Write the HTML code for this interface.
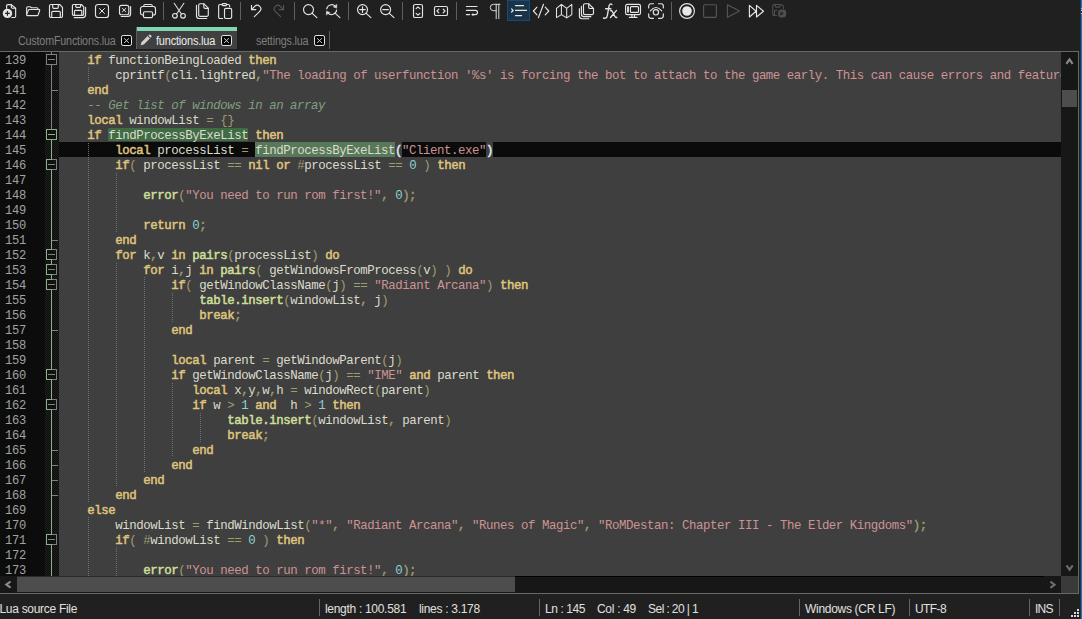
<!DOCTYPE html>
<html><head><meta charset="utf-8"><title>functions.lua - Notepad++</title>
<style>
html,body{margin:0;padding:0;}
body{width:1082px;height:619px;overflow:hidden;background:#202020;position:relative;font-family:"Liberation Sans",sans-serif;}
#root{position:absolute;left:0;top:0;width:1082px;height:619px;overflow:hidden;background:#202020;}
.abs{position:absolute;}
/* toolbar */
/* tabs */
.tab{position:absolute;font-size:12px;letter-spacing:-0.2px;transform-origin:0 0;white-space:nowrap;line-height:14px;}
/* editor */
#ed{position:absolute;left:0;top:52px;width:1061px;height:524px;background:#3f3f3f;overflow:hidden;}
#lnm{position:absolute;left:0;top:0;width:45px;height:524px;background:#0c0c0c;}
#fm{position:absolute;left:45px;top:0;width:14px;height:524px;background:repeating-conic-gradient(#0c0c0c 0% 25%,#1f1f1f 0% 50%) 0 0/2px 2px;}
.ln{position:absolute;left:5px;width:40px;height:15px;line-height:15px;font-family:"Liberation Mono",monospace;font-size:12.1px;letter-spacing:-0.26px;color:#a2a2a2;white-space:pre;}
.cl{position:absolute;height:15px;line-height:15px;font-family:"Liberation Mono",monospace;font-size:12.4px;letter-spacing:-0.44px;color:#dcdccc;white-space:pre;}
.cl i{font-style:normal;}
.cl b{font-weight:normal;-webkit-text-stroke:0.5px;}
.k{color:#dfc47d;}
.bm{color:#dde6f4;}
.f{color:#cedf99;}
.s{color:#cc9393;}
.n{color:#8cd0d3;}
.o{color:#9f9d6d;}
.p{-webkit-text-stroke:0.35px;}
.cl i.c{color:#7f9f7f;font-style:italic;}
.ig{position:absolute;width:1px;background:repeating-linear-gradient(to bottom,#5e7878 0 1px,transparent 1px 2px);}
/* status */
.st{position:absolute;top:602px;font-size:12px;letter-spacing:-0.3px;color:#e0e0e0;white-space:nowrap;line-height:14px;}
.ssep{position:absolute;top:599px;width:1px;height:17px;background:#646464;}
</style></head><body><div id="root">
<svg class="abs" style="left:0;top:0" width="800" height="26" viewBox="0 0 800 26">
<rect x="507.5" y="0.5" width="22" height="20" fill="#1b3349" stroke="#154a7c" stroke-width="1"/>
<rect x="163" y="2" width="1" height="18" fill="#606060" shape-rendering="crispEdges"/><rect x="240" y="2" width="1" height="18" fill="#606060" shape-rendering="crispEdges"/><rect x="294" y="2" width="1" height="18" fill="#606060" shape-rendering="crispEdges"/><rect x="348" y="2" width="1" height="18" fill="#606060" shape-rendering="crispEdges"/><rect x="402" y="2" width="1" height="18" fill="#606060" shape-rendering="crispEdges"/><rect x="456" y="2" width="1" height="18" fill="#606060" shape-rendering="crispEdges"/><rect x="671" y="2" width="1" height="18" fill="#606060" shape-rendering="crispEdges"/>
<g transform="translate(1.5,3)" stroke="#e4e4e4" stroke-width="1.15" fill="none" stroke-linecap="round" stroke-linejoin="round"><path d="M5.1 5.3 V2.8 a1.25 1.25 0 0 1 1.25-1.25 H9.5 L14.15 5.3 V13.25 a1.25 1.25 0 0 1 -1.25 1.25 H10.2"/><path d="M9.8 1.8 V4.1 a1.1 1.1 0 0 0 1.1 1.1 H13.9"/><circle cx="5.95" cy="10.4" r="4.7" fill="#e4e4e4" stroke="none"/><path d="M5.95 8 V12.8 M3.55 10.4 H8.35" stroke="#202020" stroke-width="1.1" stroke-linecap="butt"/></g>
<g transform="translate(25,3)" stroke="#e4e4e4" stroke-width="1.15" fill="none" stroke-linecap="round" stroke-linejoin="round"><path d="M1.65 11.3 V4.9 a1.2 1.2 0 0 1 1.2-1.2 H5 l1.5 1.05 H11.7 a1.3 1.3 0 0 1 1.3 1.3 v.3"/><path d="M2.5 12.65 a.9.9 0 0 1 -.85-1.25 L3.45 7.1 a1.1 1.1 0 0 1 1-.65 H13.9 a.8.8 0 0 1 .75 1.1 L13.05 11.95 a1.1 1.1 0 0 1 -1 .7 z"/></g>
<g transform="translate(48,3)" stroke="#e4e4e4" stroke-width="1.15" fill="none" stroke-linecap="round" stroke-linejoin="round"><path d="M2.9 1.5 H11.6 L14.5 4.4 V13.1 a1.4 1.4 0 0 1 -1.4 1.4 H2.9 a1.4 1.4 0 0 1 -1.4-1.4 V2.9 a1.4 1.4 0 0 1 1.4-1.4 z"/><path d="M4.7 1.6 V4.3 a1 1 0 0 0 1 1 H9.3 a1 1 0 0 0 1-1 V1.6"/><path d="M3.7 14.4 V9.5 a1.1 1.1 0 0 1 1.1-1.1 H11.2 a1.1 1.1 0 0 1 1.1 1.1 V14.4"/></g>
<g transform="translate(71,3)" stroke="#e4e4e4" stroke-width="1.15" fill="none" stroke-linecap="round" stroke-linejoin="round"><path d="M2.7 1.5 H10.4 L12.7 3.8 V11.1 a1.3 1.3 0 0 1 -1.3 1.3 H2.7 a1.3 1.3 0 0 1 -1.3-1.3 V2.8 a1.3 1.3 0 0 1 1.3-1.3 z"/><path d="M4.8 1.6 V3.6 a.8.8 0 0 0 .8.8 H8.8 a.8.8 0 0 0 .8-.8 V1.6"/><path d="M3.5 12.3 V8.3 a.9.9 0 0 1 .9-.9 H9.9 a.9.9 0 0 1 .9.9 V12.3"/><path d="M14.6 4.3 V11.8 a2.8 2.8 0 0 1 -2.8 2.8 H3.2"/></g>
<g transform="translate(94,3)" stroke="#e4e4e4" stroke-width="1.15" fill="none" stroke-linecap="round" stroke-linejoin="round"><rect x="1.5" y="1.5" width="13" height="13" rx="2.6"/><path d="M5.5 5.5 L10.5 10.5 M10.5 5.5 L5.5 10.5" stroke-width="1"/></g>
<g transform="translate(117,3)" stroke="#e4e4e4" stroke-width="1.15" fill="none" stroke-linecap="round" stroke-linejoin="round"><rect x="2.5" y="2.4" width="9.3" height="9.3" rx="2"/><path d="M5.4 5.3 L8.9 8.8 M8.9 5.3 L5.4 8.8" stroke-width="1"/><path d="M13.6 3.6 V10.8 a2.7 2.7 0 0 1 -2.7 2.7 H4.2"/></g>
<g transform="translate(140,3)" stroke="#e4e4e4" stroke-width="1.15" fill="none" stroke-linecap="round" stroke-linejoin="round"><path d="M3.3 12 H2.5 a2 2 0 0 1 -2-2 V5.7 a2.2 2.2 0 0 1 2.2-2.2 H13.3 a2.2 2.2 0 0 1 2.2 2.2 V10 a2 2 0 0 1 -2 2 H12.7"/><path d="M3.8 3.4 V2.7 a1.2 1.2 0 0 1 1.2-1.2 H11 a1.2 1.2 0 0 1 1.2 1.2 V3.4"/><rect x="3.5" y="8.7" width="9" height="5.9" rx="1.2"/></g>
<g transform="translate(171,3)" stroke="#e4e4e4" stroke-width="1.15" fill="none" stroke-linecap="round" stroke-linejoin="round"><path d="M3.2 0.3 L10.6 11.2 M12.9 0.3 L5.4 11.2" stroke-width="1.05"/><circle cx="3.9" cy="12.8" r="2.35"/><circle cx="12.0" cy="12.8" r="2.35"/></g>
<g transform="translate(194,3)" stroke="#e4e4e4" stroke-width="1.15" fill="none" stroke-linecap="round" stroke-linejoin="round"><path d="M6.1 .7 H9.7 L14.3 5.2 V11.9 a1.4 1.4 0 0 1 -1.4 1.4 H6.1 a1.4 1.4 0 0 1 -1.4-1.4 V2.1 a1.4 1.4 0 0 1 1.4-1.4 z"/><path d="M9.8 .9 V4 a1.3 1.3 0 0 0 1.3 1.3 H14.1"/><path d="M2.5 2.2 V12.7 a2.8 2.8 0 0 0 2.8 2.8 H12.7"/></g>
<g transform="translate(217,3)" stroke="#e4e4e4" stroke-width="1.15" fill="none" stroke-linecap="round" stroke-linejoin="round"><path d="M5.6 15.5 H3 a1.35 1.35 0 0 1 -1.35-1.35 V2.85 a1.35 1.35 0 0 1 1.35-1.35 H4.9 M9.8 1.5 H11.25 a1.35 1.35 0 0 1 1.35 1.35 V3.7"/><rect x="5" y="0.55" width="4.7" height="2.05" rx="1.02"/><rect x="7.5" y="5.3" width="7.15" height="10.2" rx="1.4"/></g>
<g transform="translate(248,3)" stroke="#e4e4e4" stroke-width="1.15" fill="none" stroke-linecap="round" stroke-linejoin="round"><path d="M3.5 2.4 V6.56 H7.8"/><path d="M3.5 6.56 L6.72 3.33 A3.53 3.53 0 0 1 11.72 8.33 L6.37 13.67"/></g>
<g transform="translate(287,3) scale(-1,1)" stroke="#555555" stroke-width="1.15" fill="none" stroke-linecap="round" stroke-linejoin="round"><path d="M3.5 2.4 V6.56 H7.8"/><path d="M3.5 6.56 L6.72 3.33 A3.53 3.53 0 0 1 11.72 8.33 L6.37 13.67"/></g>
<g transform="translate(302,3)" stroke="#e4e4e4" stroke-width="1.15" fill="none" stroke-linecap="round" stroke-linejoin="round"><circle cx="6.5" cy="6.6" r="5"/><path d="M10.2 10.3 L14.9 14.7"/></g>
<g transform="translate(325,3)" stroke="#e4e4e4" stroke-width="1.15" fill="none" stroke-linecap="round" stroke-linejoin="round"><path d="M1.7 6.0 A5 5 0 0 1 10.3 3.3"/><path d="M11.6 7.0 A5 5 0 0 1 2.9 9.9"/><path d="M11.9 1.6 L11.7 5.3 L8.4 3.9 z" fill="#e4e4e4" stroke-width=".4"/><path d="M1.2 11.7 L1.5 8.0 L4.8 9.5 z" fill="#e4e4e4" stroke-width=".4"/><path d="M10.3 10.3 L14.9 14.7"/></g>
<g transform="translate(356,3)" stroke="#e4e4e4" stroke-width="1.15" fill="none" stroke-linecap="round" stroke-linejoin="round"><circle cx="6.5" cy="6.6" r="5"/><path d="M10.2 10.3 L14.9 14.7"/><path d="M6.5 3.8 V9.4 M3.7 6.6 H9.3"/></g>
<g transform="translate(379,3)" stroke="#e4e4e4" stroke-width="1.15" fill="none" stroke-linecap="round" stroke-linejoin="round"><circle cx="6.6" cy="6.6" r="5"/><path d="M10.3 10.3 L15 14.7"/><path d="M3.8 6.6 H9.4"/></g>
<g transform="translate(410,3)" stroke="#e4e4e4" stroke-width="1.15" fill="none" stroke-linecap="round" stroke-linejoin="round"><rect x="3.5" y="1.5" width="9" height="13" rx="1.6"/><path d="M6.1 5.7 L8 3.9 L9.9 5.7 M6.1 10.4 L8 12.2 L9.9 10.4"/></g>
<g transform="translate(433,3)" stroke="#e4e4e4" stroke-width="1.15" fill="none" stroke-linecap="round" stroke-linejoin="round"><rect x="1.5" y="3.5" width="13" height="9" rx="1.6"/><path d="M5.8 6.1 L4 8 L5.8 9.9 M10.2 6.1 L12 8 L10.2 9.9"/></g>
<g transform="translate(464,3)" stroke="#e4e4e4" stroke-width="1.15" fill="none" stroke-linecap="round" stroke-linejoin="round"><path d="M2.4 3.5 H13"/><path d="M2.4 7.3 H11.4 a2.15 2.15 0 0 1 0 4.3 H8.2"/><path d="M2.4 11.6 H5.6"/><path d="M9 10.6 L7.6 11.6 L9 12.6 z" fill="#e4e4e4" stroke-width=".4"/></g>
<g transform="translate(487,3)" stroke="#e4e4e4" stroke-width="1.15" fill="none" stroke-linecap="round" stroke-linejoin="round"><path d="M13 1.3 H6.5 a3.2 3.2 0 0 0 0 6.4 H9.2 M9.2 1.3 V15.7 M11.8 1.3 V15.7" stroke-width=".95"/></g>
<g transform="translate(510.5,3)" stroke="#e4e4e4" stroke-width="1.15" fill="none" stroke-linecap="round" stroke-linejoin="round"><path d="M5 2.5 H13.1 M5 7.45 H16 M5 12.5 H11.1 M1.1 5.9 L2.6 7.45 L1.1 9" stroke-width="1.25"/></g>
<g transform="translate(533,3)" stroke="#e4e4e4" stroke-width="1.15" fill="none" stroke-linecap="round" stroke-linejoin="round"><path d="M4 4.1 L0.4 8 L4 11.9 M10.5 1.3 L5.4 14.7 M12.2 4.1 L15.8 8 L12.2 11.9"/></g>
<g transform="translate(556,3)" stroke="#e4e4e4" stroke-width="1.15" fill="none" stroke-linecap="round" stroke-linejoin="round"><path d="M0.5 5.4 L5.4 1.4 L10.7 5.4 L15.8 1.4 V11.6 L10.7 14.9 L5.4 11.6 L0.5 14.6 z M5.4 1.4 V11.6 M10.7 5.4 V14.9" stroke-width="1.05"/></g>
<g transform="translate(579,3)" stroke="#e4e4e4" stroke-width="1.15" fill="none" stroke-linecap="round" stroke-linejoin="round"><path d="M5.9 .7 H9.6 L14.5 5.5 V10.2 a1.4 1.4 0 0 1 -1.4 1.4 H5.9 a1.4 1.4 0 0 1 -1.4-1.4 V2.1 a1.4 1.4 0 0 1 1.4-1.4 z"/><path d="M9.7 .9 V4.2 a1.3 1.3 0 0 0 1.3 1.3 H14.3"/><path d="M2.4 3.3 V11 a2.6 2.6 0 0 0 2.6 2.6 H11.9"/><path d="M0.4 5.5 V13 a2.7 2.7 0 0 0 2.7 2.7 H9.8"/></g>
<g transform="translate(602,3)" stroke="#e4e4e4" stroke-width="1.35" fill="none" stroke-linecap="round" stroke-linejoin="round"><path d="M9.9 1.5 C8.5 .5 7.3 1.3 7 3.2 L5.3 12.6 C4.9 14.8 3.6 15.8 1.5 15"/><path d="M3.6 5.7 H8.9"/><path d="M8.4 7.6 C9.3 7.2 9.8 7.6 10.3 8.5 L12.8 13.3 C13.3 14.3 13.9 14.7 14.8 14.3 M14.5 7.4 L8.5 14.5"/></g>
<g transform="translate(625,3)" stroke="#e4e4e4" stroke-width="1.15" fill="none" stroke-linecap="round" stroke-linejoin="round"><rect x="0.6" y="1.4" width="14.9" height="10.2" rx="1.6"/><rect x="2.1" y="3.3" width="1.8" height="6.3" fill="#e4e4e4" stroke="none"/><rect x="5.4" y="3.6" width="8.1" height="5.8" rx="1"/><path d="M6.9 11.7 V14.3 M9.5 11.7 V14.3 M4.3 14.4 H12"/></g>
<g transform="translate(648,3)" stroke="#e4e4e4" stroke-width="1.15" fill="none" stroke-linecap="round" stroke-linejoin="round"><path d="M0.7 5 V2.9 a2.2 2.2 0 0 1 2.2-2.2 H5.5 M10.5 .7 H13.1 a2.2 2.2 0 0 1 2.2 2.2 V5 M0.7 10.8 V13.1 a2.2 2.2 0 0 0 2.2 2.2 H5.5 M10.5 15.3 H13.1 a2.2 2.2 0 0 0 2.2-2.2 V10.8"/><path d="M2.3 7.9 Q8 1.1 13.7 7.9"/><circle cx="7.9" cy="9.3" r="2.65"/></g>
<g transform="translate(679,3)" stroke="#e4e4e4" stroke-width="1.15" fill="none" stroke-linecap="round" stroke-linejoin="round"><circle cx="8" cy="8" r="7.4"/><circle cx="8" cy="8" r="4.8" fill="#e8e8e8" stroke="none"/></g>
<g transform="translate(702,3)" stroke="#555555" stroke-width="1.15" fill="none" stroke-linecap="round" stroke-linejoin="round"><rect x="1.6" y="1.7" width="12.8" height="12.6" rx="1.3"/></g>
<g transform="translate(725.5,3)" stroke="#555555" stroke-width="1.15" fill="none" stroke-linecap="round" stroke-linejoin="round"><path d="M1.9 1.8 V14.2 L14 8 z"/></g>
<g transform="translate(748.5,3)" stroke="#e4e4e4" stroke-width="1.15" fill="none" stroke-linecap="round" stroke-linejoin="round"><path d="M0.9 2.4 V14 L7.6 8.2 z M8 2.4 V14 L15 8.2 z"/></g>
<g transform="translate(771,3)" stroke="#4f4f4f" stroke-width="1.1" fill="none" stroke-linecap="round" stroke-linejoin="round"><path d="M5.6 12.46 H2.95 a1.2 1.2 0 0 1 -1.2-1.2 V2.64 a1.2 1.2 0 0 1 1.2-1.2 H10.4 L12.6 3.5 V5.4"/><path d="M4.3 1.6 V3.3 a.8.8 0 0 0 .8.8 H8.2 a.8.8 0 0 0 .8-.8 V1.6"/><path d="M3.5 12.3 V8.2 a.9.9 0 0 1 .9-.9 H6.0"/><rect x="7.15" y="6.5" width="8" height="8" rx="3.2" fill="#4f4f4f" stroke="none"/><path d="M9.8 9 L12.5 10.5 L9.8 12 z" fill="#242424" stroke="#242424" stroke-width=".5"/></g>
</svg>
<div class="abs" style="left:136px;top:27px;width:1px;height:22px;background:#5c5c5c"></div><div class="abs" style="left:137px;top:27px;width:100px;height:4px;background:#7fd6b3"></div><div class="abs" style="left:137px;top:31px;width:100px;height:18px;background:#404040"></div><div class="abs" style="left:329px;top:31px;width:1px;height:18px;background:#5c5c5c"></div>
<div class="tab" style="left:17.5px;top:34px;color:#7f7f7f;transform:scaleX(0.895)">CustomFunctions.lua</div><div class="tab" style="left:155.5px;top:34px;color:#ececec;transform:scaleX(0.914)">functions.lua</div><div class="tab" style="left:255.5px;top:34px;color:#7f7f7f;transform:scaleX(0.899)">settings.lua</div><svg class="abs" style="left:121px;top:35px" width="11" height="11" viewBox="0 0 11 11"><rect x="0.5" y="0.5" width="10" height="10" rx="1.6" fill="#060606" stroke="#e2e2e2" stroke-width="1"/><path d="M3.1 3.3 L7.9 7.9 M7.9 3.3 L3.1 7.9" stroke="#d4d4d4" stroke-width="0.95" fill="none"/></svg><svg class="abs" style="left:221px;top:35px" width="11" height="11" viewBox="0 0 11 11"><rect x="0.5" y="0.5" width="10" height="10" rx="1.6" fill="#060606" stroke="#e2e2e2" stroke-width="1"/><path d="M3.1 3.3 L7.9 7.9 M7.9 3.3 L3.1 7.9" stroke="#d4d4d4" stroke-width="0.95" fill="none"/></svg><svg class="abs" style="left:314px;top:35px" width="11" height="11" viewBox="0 0 11 11"><rect x="0.5" y="0.5" width="10" height="10" rx="1.6" fill="#060606" stroke="#e2e2e2" stroke-width="1"/><path d="M3.1 3.3 L7.9 7.9 M7.9 3.3 L3.1 7.9" stroke="#d4d4d4" stroke-width="0.95" fill="none"/></svg><svg class="abs" style="left:140px;top:34px" width="12" height="12" viewBox="0 0 12 12"><path d="M0.7 11.3 L1.5 8.2 L7.6 2.1 L9.9 4.4 L3.8 10.5 z" fill="#d2d2d2"/><path d="M8.3 1.5 L9 0.9 a1.2 1.2 0 0 1 1.7 0 l0.5 0.5 a1.2 1.2 0 0 1 0 1.7 L10.5 3.8 z" fill="#d2d2d2"/></svg>
<div class="abs" style="left:0;top:51px;width:1079px;height:1px;background:#686868"></div>
<div class="abs" style="left:0;top:593px;width:1079px;height:1px;background:#686868"></div>
<div class="abs" style="left:1078px;top:51px;width:1px;height:543px;background:#686868"></div>
<div class="abs" style="left:1080px;top:0;width:1px;height:619px;background:#21384a"></div>
<div class="abs" style="left:1081px;top:0;width:1px;height:619px;background:#2672ae"></div>
<div id="ed"><div id="lnm"></div><div id="fm"></div>
<div class="abs" style="left:59px;top:90px;width:1002px;height:15px;background:#0b0b0b"></div>
<div class="abs" style="left:108px;top:76px;width:140px;height:13px;background:#3f6b45;border-radius:1px"></div>
<div class="abs" style="left:255px;top:90px;width:140px;height:15px;background:#57795a"></div>
<div class="abs" style="left:395px;top:90px;width:7px;height:15px;background:#3f3f3f"></div>
<div class="abs" style="left:486px;top:90px;width:7px;height:15px;background:#3f3f3f"></div>
<div class="ig" style="left:88px;top:15px;height:15px"></div><div class="ig" style="left:88px;top:91px;height:359px"></div><div class="ig" style="left:88px;top:465px;height:60px"></div><div class="ig" style="left:116px;top:121px;height:59px"></div><div class="ig" style="left:116px;top:211px;height:224px"></div><div class="ig" style="left:116px;top:495px;height:30px"></div><div class="ig" style="left:144px;top:225px;height:195px"></div><div class="ig" style="left:172px;top:241px;height:29px"></div><div class="ig" style="left:172px;top:331px;height:74px"></div><div class="ig" style="left:200px;top:361px;height:29px"></div>
<svg class="abs" style="left:45px;top:0" width="14" height="524" viewBox="0 0 14 524" shape-rendering="crispEdges"><rect x="6" y="0" width="1" height="77" fill="#808080"/><rect x="6" y="77" width="1" height="447" fill="#8ab28a"/><rect x="7" y="38" width="6" height="1" fill="#808080"/><rect x="7" y="188" width="6" height="1" fill="#808080"/><rect x="7" y="278" width="6" height="1" fill="#808080"/><rect x="7" y="398" width="6" height="1" fill="#808080"/><rect x="7" y="413" width="6" height="1" fill="#808080"/><rect x="7" y="428" width="6" height="1" fill="#808080"/><rect x="7" y="443" width="6" height="1" fill="#808080"/><rect x="1" y="2" width="11" height="11" fill="#808080"/><rect x="1" y="2" width="6" height="11" fill="#808080"/><rect x="2" y="3" width="9" height="9" fill="#111111"/><rect x="3" y="7" width="7" height="1" fill="#808080"/><rect x="1" y="77" width="11" height="11" fill="#8ab28a"/><rect x="1" y="77" width="6" height="11" fill="#8ab28a"/><rect x="2" y="78" width="9" height="9" fill="#111111"/><rect x="3" y="82" width="7" height="1" fill="#8ab28a"/><rect x="1" y="107" width="11" height="11" fill="#808080"/><rect x="1" y="107" width="6" height="11" fill="#8ab28a"/><rect x="2" y="108" width="9" height="9" fill="#111111"/><rect x="3" y="112" width="7" height="1" fill="#808080"/><rect x="1" y="197" width="11" height="11" fill="#808080"/><rect x="1" y="197" width="6" height="11" fill="#8ab28a"/><rect x="2" y="198" width="9" height="9" fill="#111111"/><rect x="3" y="202" width="7" height="1" fill="#808080"/><rect x="1" y="212" width="11" height="11" fill="#808080"/><rect x="1" y="212" width="6" height="11" fill="#8ab28a"/><rect x="2" y="213" width="9" height="9" fill="#111111"/><rect x="3" y="217" width="7" height="1" fill="#808080"/><rect x="1" y="227" width="11" height="11" fill="#808080"/><rect x="1" y="227" width="6" height="11" fill="#8ab28a"/><rect x="2" y="228" width="9" height="9" fill="#111111"/><rect x="3" y="232" width="7" height="1" fill="#808080"/><rect x="1" y="317" width="11" height="11" fill="#808080"/><rect x="1" y="317" width="6" height="11" fill="#8ab28a"/><rect x="2" y="318" width="9" height="9" fill="#111111"/><rect x="3" y="322" width="7" height="1" fill="#808080"/><rect x="1" y="347" width="11" height="11" fill="#808080"/><rect x="1" y="347" width="6" height="11" fill="#8ab28a"/><rect x="2" y="348" width="9" height="9" fill="#111111"/><rect x="3" y="352" width="7" height="1" fill="#808080"/><rect x="1" y="482" width="11" height="11" fill="#808080"/><rect x="1" y="482" width="6" height="11" fill="#8ab28a"/><rect x="2" y="483" width="9" height="9" fill="#111111"/><rect x="3" y="487" width="7" height="1" fill="#808080"/></svg>
<div class="ln" style="top:2px">139</div><div class="cl" style="left:87.25px;top:2px"><b class="k">if</b> functionBeingLoaded <b class="k">then</b></div>
<div class="ln" style="top:17px">140</div><div class="cl" style="left:115.25px;top:17px">cprintf<i class="o">(</i>cli.lightred<i class="o p">,</i><i class="s">"The loading of userfunction '%s' is forcing the bot to attach to the game early. This can cause errors and features</i></div>
<div class="ln" style="top:32px">141</div><div class="cl" style="left:87.25px;top:32px"><b class="k">end</b></div>
<div class="ln" style="top:47px">142</div><div class="cl" style="left:87.25px;top:47px"><i class="c">-- Get list of windows in an array</i></div>
<div class="ln" style="top:62px">143</div><div class="cl" style="left:87.25px;top:62px"><b class="k">local</b> windowList <i class="o">=</i> <i class="o">{}</i></div>
<div class="ln" style="top:77px">144</div><div class="cl" style="left:87.25px;top:77px"><b class="k">if</b> findProcessByExeList <b class="k">then</b></div>
<div class="ln" style="top:92px">145</div><div class="cl" style="left:115.25px;top:92px"><b class="k">local</b> processList <i class="o">=</i> findProcessByExeList<b class="bm">(</b><i class="s">"Client.exe"</i><b class="bm">)</b></div>
<div class="ln" style="top:107px">146</div><div class="cl" style="left:115.25px;top:107px"><b class="k">if</b><i class="o">(</i> processList <i class="o">==</i> <b class="k">nil</b> <b class="k">or</b> <i class="o">#</i>processList <i class="o">==</i> <i class="n">0</i> <i class="o">)</i> <b class="k">then</b></div>
<div class="ln" style="top:122px">147</div>
<div class="ln" style="top:137px">148</div><div class="cl" style="left:143.25px;top:137px"><b class="f">error</b><i class="o">(</i><i class="s">"You need to run rom first!"</i><i class="o p">,</i> <i class="n">0</i><i class="o p">);</i></div>
<div class="ln" style="top:152px">149</div>
<div class="ln" style="top:167px">150</div><div class="cl" style="left:143.25px;top:167px"><b class="k">return</b> <i class="n">0</i><i class="o p">;</i></div>
<div class="ln" style="top:182px">151</div><div class="cl" style="left:115.25px;top:182px"><b class="k">end</b></div>
<div class="ln" style="top:197px">152</div><div class="cl" style="left:115.25px;top:197px"><b class="k">for</b> k<i class="o p">,</i>v <b class="k">in</b> <b class="f">pairs</b><i class="o">(</i>processList<i class="o">)</i> <b class="k">do</b></div>
<div class="ln" style="top:212px">153</div><div class="cl" style="left:143.25px;top:212px"><b class="k">for</b> i<i class="o p">,</i>j <b class="k">in</b> <b class="f">pairs</b><i class="o">(</i> getWindowsFromProcess<i class="o">(</i>v<i class="o">)</i> <i class="o">)</i> <b class="k">do</b></div>
<div class="ln" style="top:227px">154</div><div class="cl" style="left:171.25px;top:227px"><b class="k">if</b><i class="o">(</i> getWindowClassName<i class="o">(</i>j<i class="o">)</i> <i class="o">==</i> <i class="s">"Radiant Arcana"</i><i class="o">)</i> <b class="k">then</b></div>
<div class="ln" style="top:242px">155</div><div class="cl" style="left:199.25px;top:242px"><b class="f">table.insert</b><i class="o">(</i>windowList<i class="o p">,</i> j<i class="o">)</i></div>
<div class="ln" style="top:257px">156</div><div class="cl" style="left:199.25px;top:257px"><b class="k">break</b><i class="o p">;</i></div>
<div class="ln" style="top:272px">157</div><div class="cl" style="left:171.25px;top:272px"><b class="k">end</b></div>
<div class="ln" style="top:287px">158</div>
<div class="ln" style="top:302px">159</div><div class="cl" style="left:171.25px;top:302px"><b class="k">local</b> parent <i class="o">=</i> getWindowParent<i class="o">(</i>j<i class="o">)</i></div>
<div class="ln" style="top:317px">160</div><div class="cl" style="left:171.25px;top:317px"><b class="k">if</b> getWindowClassName<i class="o">(</i>j<i class="o">)</i> <i class="o">==</i> <i class="s">"IME"</i> <b class="k">and</b> parent <b class="k">then</b></div>
<div class="ln" style="top:332px">161</div><div class="cl" style="left:192.25px;top:332px"><b class="k">local</b> x<i class="o p">,</i>y<i class="o p">,</i>w<i class="o p">,</i>h <i class="o">=</i> windowRect<i class="o">(</i>parent<i class="o">)</i></div>
<div class="ln" style="top:347px">162</div><div class="cl" style="left:192.25px;top:347px"><b class="k">if</b> w <i class="o">&gt;</i> <i class="n">1</i> <b class="k">and</b>  h <i class="o">&gt;</i> <i class="n">1</i> <b class="k">then</b></div>
<div class="ln" style="top:362px">163</div><div class="cl" style="left:227.25px;top:362px"><b class="f">table.insert</b><i class="o">(</i>windowList<i class="o p">,</i> parent<i class="o">)</i></div>
<div class="ln" style="top:377px">164</div><div class="cl" style="left:227.25px;top:377px"><b class="k">break</b><i class="o p">;</i></div>
<div class="ln" style="top:392px">165</div><div class="cl" style="left:192.25px;top:392px"><b class="k">end</b></div>
<div class="ln" style="top:407px">166</div><div class="cl" style="left:171.25px;top:407px"><b class="k">end</b></div>
<div class="ln" style="top:422px">167</div><div class="cl" style="left:143.25px;top:422px"><b class="k">end</b></div>
<div class="ln" style="top:437px">168</div><div class="cl" style="left:115.25px;top:437px"><b class="k">end</b></div>
<div class="ln" style="top:452px">169</div><div class="cl" style="left:87.25px;top:452px"><b class="k">else</b></div>
<div class="ln" style="top:467px">170</div><div class="cl" style="left:115.25px;top:467px">windowList <i class="o">=</i> findWindowList<i class="o">(</i><i class="s">"*"</i><i class="o p">,</i> <i class="s">"Radiant Arcana"</i><i class="o p">,</i> <i class="s">"Runes of Magic"</i><i class="o p">,</i> <i class="s">"RoMDestan: Chapter III - The Elder Kingdoms"</i><i class="o p">);</i></div>
<div class="ln" style="top:482px">171</div><div class="cl" style="left:115.25px;top:482px"><b class="k">if</b><i class="o">(</i> <i class="o">#</i>windowList <i class="o">==</i> <i class="n">0</i> <i class="o">)</i> <b class="k">then</b></div>
<div class="ln" style="top:497px">172</div>
<div class="ln" style="top:512px">173</div><div class="cl" style="left:143.25px;top:512px"><b class="f">error</b><i class="o">(</i><i class="s">"You need to run rom first!"</i><i class="o p">,</i> <i class="n">0</i><i class="o p">);</i></div>
</div>
<div class="abs" style="left:1061px;top:52px;width:17px;height:524px;background:#171717"></div>
<div class="abs" style="left:1062px;top:90px;width:15px;height:17px;background:#4d4d4d"></div>
<div class="abs" style="left:0;top:576px;width:1061px;height:17px;background:#171717"></div>
<div class="abs" style="left:17px;top:577px;width:498px;height:15px;background:#4d4d4d"></div>
<div class="abs" style="left:1061px;top:576px;width:17px;height:17px;background:#3a3a3a"></div>
<div class="abs" style="left:515px;top:576px;width:529px;height:1px;background:#000"></div>
<div class="abs" style="left:17px;top:576px;width:498px;height:1px;background:#2a2a2a"></div>
<div class="abs" style="left:1081px;top:8px;width:1px;height:1px;background:#cfc78f"></div><div class="abs" style="left:1081px;top:10px;width:1px;height:1px;background:#d8d8d8"></div><div class="abs" style="left:1081px;top:11px;width:1px;height:1px;background:#203246"></div><div class="abs" style="left:1081px;top:12px;width:1px;height:1px;background:#203246"></div><div class="abs" style="left:1081px;top:13px;width:1px;height:1px;background:#d0d0d0"></div>
<svg class="abs" style="left:1061px;top:52px" width="17" height="17" viewBox="0 0 17 17"><path d="M5.4 11.9 L8.5 7.4 L11.6 11.9" fill="none" stroke="#8a8a8a" stroke-width="2.1" stroke-linejoin="miter"/></svg>
<svg class="abs" style="left:1061px;top:559px" width="17" height="17" viewBox="0 0 17 17"><path d="M5.5 6.3 L8.6 10.7 L11.7 6.3" fill="none" stroke="#6c6c6c" stroke-width="2.1" stroke-linejoin="miter"/></svg>
<svg class="abs" style="left:0px;top:576px" width="17" height="17" viewBox="0 0 17 17"><path d="M10.6 5.5 L6.3 8.6 L10.6 11.7" fill="none" stroke="#8a8a8a" stroke-width="2.1" stroke-linejoin="miter"/></svg>
<svg class="abs" style="left:1044px;top:576px" width="17" height="17" viewBox="0 0 17 17"><path d="M6.4 5.6 L10.6 8.7 L6.4 11.8" fill="none" stroke="#6c6c6c" stroke-width="2.1" stroke-linejoin="miter"/></svg>
<div class="ssep" style="left:319px"></div><div class="ssep" style="left:539px"></div><div class="ssep" style="left:799px"></div><div class="ssep" style="left:909px"></div><div class="ssep" style="left:1029px"></div><div class="ssep" style="left:1059px"></div>
<div class="st" style="left:-0.5px">Lua source File</div><div class="st" style="left:325px">length : 100.581</div><div class="st" style="left:419px">lines : 3.178</div><div class="st" style="left:545px"><span style="letter-spacing:-0.42px">Ln : 145</span></div><div class="st" style="left:597px">Col : 49</div><div class="st" style="left:648px"><span style="letter-spacing:-0.45px;word-spacing:-0.4px">Sel : 20 | 1</span></div><div class="st" style="left:805px">Windows (CR LF)</div><div class="st" style="left:915px"><span style="letter-spacing:-0.6px">UTF-8</span></div><div class="st" style="left:1035px"><span style="letter-spacing:-0.8px">INS</span></div>
<svg class="abs" style="left:1068px;top:607px" width="12" height="12" viewBox="0 0 12 12" shape-rendering="crispEdges"><rect x="9" y="2" width="2" height="2" fill="#dcdcdc"/><rect x="6" y="5" width="2" height="2" fill="#dcdcdc"/><rect x="9" y="5" width="2" height="2" fill="#dcdcdc"/><rect x="3" y="8" width="2" height="2" fill="#dcdcdc"/><rect x="6" y="8" width="2" height="2" fill="#dcdcdc"/><rect x="9" y="8" width="2" height="2" fill="#dcdcdc"/></svg>
</div></body></html>
